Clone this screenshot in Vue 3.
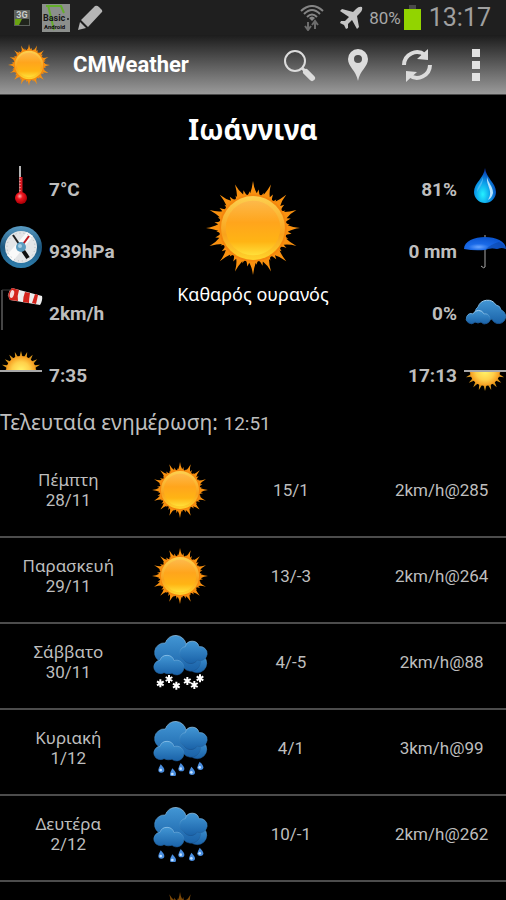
<template>
  <div class="screen">
    <!-- Shared gradients and weather symbols -->
    <svg class="defs" width="0" height="0" aria-hidden="true">
      <defs>
        <linearGradient id="sunDisc" x1="0" y1="0" x2="0" y2="1">
          <stop offset="0" stop-color="#fdb94a" />
          <stop offset="0.4" stop-color="#ffa51c" />
          <stop offset="0.75" stop-color="#ffb414" />
          <stop offset="1" stop-color="#ffe03a" />
        </linearGradient>
        <linearGradient id="sunRim" x1="0" y1="0" x2="0" y2="1">
          <stop offset="0" stop-color="#fdd050" />
          <stop offset="0.6" stop-color="#f9a21c" />
          <stop offset="1" stop-color="#ffd42c" />
        </linearGradient>
        <radialGradient id="sunHalf">
          <stop offset="0" stop-color="#fff46a" />
          <stop offset="0.6" stop-color="#ffd04a" />
          <stop offset="1" stop-color="#f59a1e" />
        </radialGradient>
        <linearGradient id="cloudFill" x1="0" y1="0" x2="0" y2="1">
          <stop offset="0" stop-color="#4296d4" />
          <stop offset="1" stop-color="#1a62a8" />
        </linearGradient>
        <linearGradient id="cloudEdge" x1="0" y1="0" x2="0" y2="1">
          <stop offset="0" stop-color="#a5d2f2" />
          <stop offset="0.5" stop-color="#3a86c4" />
          <stop offset="1" stop-color="#174f8a" />
        </linearGradient>
        <radialGradient id="dropFill" cx="0.4" cy="0.75" r="0.7">
          <stop offset="0" stop-color="#25f0ff" />
          <stop offset="0.5" stop-color="#0a9be8" />
          <stop offset="1" stop-color="#0a35b0" />
        </radialGradient>
        <radialGradient id="umbrellaFill" cx="0.35" cy="0.75" r="0.7">
          <stop offset="0" stop-color="#6aa6ff" />
          <stop offset="0.35" stop-color="#1a6ae8" />
          <stop offset="1" stop-color="#0c56d0" />
        </radialGradient>
        <radialGradient id="bulbFill" cx="0.4" cy="0.35" r="0.6">
          <stop offset="0" stop-color="#ffb0b0" />
          <stop offset="0.4" stop-color="#f01820" />
          <stop offset="1" stop-color="#b00008" />
        </radialGradient>
        <linearGradient id="gaugeRing" x1="0" y1="0" x2="0" y2="1">
          <stop offset="0" stop-color="#5a9cc4" />
          <stop offset="0.5" stop-color="#1c567e" />
          <stop offset="1" stop-color="#2f7fae" />
        </linearGradient>
      </defs>

      <symbol id="sun" viewBox="0 0 100 100">
        <path v-for="n in 16" :key="n" :d="rayPath" :transform="rotation(n, 16)" fill="#f8900f" />
        <circle cx="50" cy="50" r="36" fill="#f4860c" />
        <circle cx="50" cy="50" r="34" fill="url(#sunRim)" />
        <circle cx="50" cy="50" r="29" fill="url(#sunDisc)" />
      </symbol>

      <symbol id="halfSun" viewBox="0 0 42 22">
        <path
          v-for="n in 20"
          :key="n"
          d="M19 9 L21 1 L23 9 Z"
          :transform="`rotate(${n * 18} 21 21)`"
          fill="#d8941c"
        />
        <circle cx="21" cy="21" r="15" fill="url(#sunHalf)" />
        <path d="M0 21 H42" stroke="#a8a8a8" stroke-width="2" />
      </symbol>

      <symbol id="clouds" viewBox="0 0 168 168">
        <g fill="url(#cloudFill)" stroke="url(#cloudEdge)" stroke-width="2">
          <circle cx="136" cy="88" r="28" />
          <path
            d="M30 84 A29 29 0 0 1 40 27 A32 32 0 0 1 102 30 A27 27 0 0 1 140 66 A28 28 0 0 1 94 100 Q60 112 30 84 Z"
          />
          <path
            d="M95 76 A20 20 0 0 1 100 38 A21 21 0 0 1 141 38 A21 21 0 1 1 136 78 A24 24 0 0 1 95 76 Z"
          />
          <path
            d="M36 116 A20 20 0 1 1 24 79 A22 22 0 0 1 66 80 A22 22 0 1 1 60 118 Q48 122 36 116 Z"
          />
        </g>
      </symbol>
    </svg>

    <header class="status-bar">
      <div class="status-group">
        <svg class="icon-3g" viewBox="0 0 18 18">
          <rect x="1" y="1" width="16" height="16" fill="#5c605c" />
          <rect x="2" y="10" width="14" height="6" fill="#20241c" />
          <path d="M2 16 V10 H9 L6 16 Z" fill="#6aa312" />
          <text x="9" y="9" text-anchor="middle" font-size="9" font-weight="700" fill="#c9ccc9">3G</text>
        </svg>
        <svg class="icon-basic" viewBox="0 0 30 30">
          <rect x="1" y="1" width="28" height="28" fill="#8c8f8c" />
          <path d="M7 2 L13 27 M5 3 H20 L23 10" fill="none" stroke="#64ad2c" stroke-width="2" />
          <text x="2" y="18" font-size="9" font-weight="700" fill="#181818">Basic</text>
          <circle cx="27" cy="16" r="1" fill="#181818" />
          <text x="3" y="26" font-size="6" font-weight="700" fill="#0c0c0c">Android</text>
        </svg>
        <svg class="icon-pen" viewBox="0 0 26 26" fill="#b5b5b5">
          <path d="M4 15 L18 1 Q20 0 22 2 L25 5 Q26 7 24 8 L11 22 Z" />
          <path d="M3 17 L9 23 L1 25 Z" />
        </svg>
      </div>
      <div class="status-group">
        <svg class="icon-wifi" viewBox="0 0 24 26">
          <g fill="none" stroke="#858585" stroke-width="2">
            <path d="M1 6 Q12 -4 23 6" />
            <path d="M4 9 Q12 1 20 9" />
            <path d="M7 12 Q12 7 17 12" />
          </g>
          <path d="M9 13 Q12 10 15 13 L12 16 Z" fill="#858585" />
          <path
            d="M8 17 V24 M5 21 L8 25 L11 21 M15 24 V17 M12 20 L15 16 L18 20"
            fill="none"
            stroke="#6c6c6c"
            stroke-width="2"
          />
        </svg>
        <svg class="icon-plane" viewBox="0 0 24 24" fill="#c4c4c4">
          <path
            d="M23 1 Q20 0 17 3 L14 6 L3 3 L1 5 L10 11 L6 15 L2 15 L1 17 L5 19 L7 23 L9 22 L9 18 L13 14 L18 23 L20 21 L18 10 L21 7 Q24 4 23 1 Z"
          />
        </svg>
        <span class="battery-text">80%</span>
        <span class="battery"></span>
        <time class="clock">13:17</time>
      </div>
    </header>

    <nav class="app-bar">
      <svg class="app-logo"><use href="#sun" /></svg>
      <h1 class="app-title">CMWeather</h1>
      <div class="actions">
        <button type="button" class="action" aria-label="Search">
          <svg viewBox="0 0 32 32">
            <circle cx="12" cy="12" r="10" fill="none" stroke="#dcdcdc" stroke-width="2" />
            <path d="M19 19 L23 23" stroke="#dcdcdc" stroke-width="3" />
            <path d="M23 23 L29 29" stroke="#dcdcdc" stroke-width="6" stroke-linecap="round" />
          </svg>
        </button>
        <button type="button" class="action" aria-label="Location">
          <svg viewBox="0 0 32 32">
            <path
              d="M16 0 A10 10 0 0 0 6 10 C6 18 14 21 16 32 C18 21 26 18 26 10 A10 10 0 0 0 16 0 Z M16 6 A4 4 0 1 1 16 14 A4 4 0 1 1 16 6 Z"
              fill="#dcdcdc"
              fill-rule="evenodd"
            />
          </svg>
        </button>
        <button type="button" class="action" aria-label="Refresh">
          <svg viewBox="0 0 32 32">
            <g fill="none" stroke="#dcdcdc" stroke-width="4">
              <path d="M3 16 A13 13 0 0 1 24 6" />
              <path d="M29 16 A13 13 0 0 1 8 26" />
            </g>
            <path d="M27 0 V11 L16 10 Z M5 33 V22 L16 23 Z" fill="#dcdcdc" />
          </svg>
        </button>
        <button type="button" class="action" aria-label="Menu">
          <svg viewBox="0 0 32 32" fill="#e2e2e2">
            <rect x="12" y="0" width="8" height="8" />
            <rect x="12" y="12" width="8" height="8" />
            <rect x="12" y="24" width="8" height="8" />
          </svg>
        </button>
      </div>
    </nav>

    <main>
      <h2 class="city">Ιωάννινα</h2>

      <section class="current">
        <ul class="stats">
          <li class="stat">
            <svg class="stat-icon" viewBox="0 0 42 42">
              <path d="M20 2 V30" stroke="#909090" stroke-width="2" />
              <path d="M20 2 V13" stroke="#d8d8d8" stroke-width="1" />
              <path d="M21 13 V32" stroke="#d81820" stroke-width="3" />
              <path d="M20 14 V28" stroke="#ffc0c0" stroke-width="1" stroke-dasharray="1 2" />
              <circle cx="21" cy="34" r="6" fill="url(#bulbFill)" />
            </svg>
            <span>7°C</span>
          </li>
          <li class="stat">
            <svg class="stat-icon" viewBox="0 0 42 42">
              <circle cx="21" cy="21" r="21" fill="url(#gaugeRing)" />
              <circle cx="21" cy="21" r="16" fill="#e4e6e8" />
              <path d="M7 29 L27 6 L33 10 L13 35 Z" fill="#fafafa" />
              <circle cx="21" cy="21" r="14" fill="none" stroke="#b4babe" stroke-dasharray="1 3" />
              <path d="M13 9 L21 21" stroke="#202020" stroke-width="2" />
              <path d="M21 21 L29 10" stroke="#c01820" stroke-width="2" />
              <path d="M22 23 L28 32" stroke="#101010" stroke-width="4" />
              <circle cx="21" cy="21" r="5" fill="#5c9cc0" />
              <circle cx="20" cy="20" r="2" fill="#a8cee2" />
            </svg>
            <span>939hPa</span>
          </li>
          <li class="stat">
            <svg class="stat-icon" viewBox="0 0 42 42">
              <path d="M2 2 V42" stroke="#8a8a8a" stroke-width="1" />
              <path d="M2 2 L10 2 L8 8" fill="none" stroke="#3c3c3c" />
              <path d="M12 0 L42 8 Q43 12 40 17 L10 12 Q6 6 12 0 Z" fill="#ececec" />
              <path d="M12 0 L19 2 Q17 8 18 13 L10 12 Q6 6 12 0 Z" fill="#d4241c" />
              <path d="M25 4 L30 5 Q29 11 29 15 L23 14 Q23 9 25 4 Z M35 6 L38 7 Q37 12 36 16 L32 15 Z" fill="#d4241c" />
              <ellipse cx="12" cy="6" rx="2" ry="4" fill="#f4dada" transform="rotate(15 12 6)" />
            </svg>
            <span>2km/h</span>
          </li>
          <li class="stat">
            <svg class="stat-icon" viewBox="0 0 42 42">
              <use href="#halfSun" width="42" height="22" />
            </svg>
            <span>7:35</span>
          </li>
        </ul>

        <div class="now">
          <svg class="now-icon"><use href="#sun" /></svg>
          <p class="now-text">Καθαρός ουρανός</p>
        </div>

        <ul class="stats stats-right">
          <li class="stat">
            <svg class="stat-icon" viewBox="0 0 42 42">
              <path d="M21 4 C22 14 32 19 32 28 A11 11 0 0 1 10 28 C10 19 20 14 21 4 Z" fill="url(#dropFill)" />
              <path d="M23 13 C24 19 29 22 29 29 C28 33 26 35 24 36 C30 27 22 22 23 13 Z" fill="#b8e4ff" />
              <path d="M19 13 C18 19 13 22 13 28 C16 23 19 20 19 13 Z" fill="#4cb8f4" />
            </svg>
            <span>81%</span>
          </li>
          <li class="stat">
            <svg class="stat-icon" viewBox="0 0 42 42">
              <path d="M21 9 V41 Q20 43 17 40" fill="none" stroke="#a8a8a8" stroke-width="1" />
              <path d="M0 23 C0 7 42 7 42 23 Q38 21 33 23 Q27 21 21 24 Q10 25 0 23 Z" fill="url(#umbrellaFill)" />
              <path d="M21 24 Q27 21 33 23 Q38 21 42 23 Q40 18 35 16 Q27 18 21 24 Z" fill="#0a3f9c" opacity="0.5" />
            </svg>
            <span>0 mm</span>
          </li>
          <li class="stat">
            <svg class="stat-icon" viewBox="0 0 42 42">
              <g fill="url(#cloudFill)" stroke="url(#cloudEdge)" transform="translate(2 1)">
                <path d="M12 28 A6 6 0 0 1 12 18 A10 10 0 0 1 30 16 A6 6 0 0 1 35 21 A7 7 0 1 1 26 30 Q18 34 12 28 Z" />
                <path d="M9 33 A5 5 0 1 1 7 25 A6 6 0 0 1 18 25 A5 5 0 1 1 15 33 Q12 35 9 33 Z" />
              </g>
            </svg>
            <span>0%</span>
          </li>
          <li class="stat">
            <svg class="stat-icon" viewBox="0 0 42 42">
              <use href="#halfSun" width="42" height="22" transform="translate(0 42) scale(1 -1)" />
            </svg>
            <span>17:13</span>
          </li>
        </ul>
      </section>

      <p class="updated">Τελευταία ενημέρωση: <time>12:51</time></p>

      <table class="forecast">
        <tbody>
          <tr v-for="(day, i) in forecast" :key="i">
            <td class="col-date">
              <div class="day-name">{{ day.name }}</div>
              <div>{{ day.date }}</div>
            </td>
            <td class="col-icon">
              <svg v-if="day.icon === 'sun'" class="day-icon"><use href="#sun" /></svg>
              <svg v-else class="day-icon" viewBox="0 0 168 168">
                <use href="#clouds" width="168" height="168" />
                <g v-if="day.icon === 'snow'" stroke="#fff" stroke-width="6">
                  <path
                    v-for="([x, y], n) in flakes"
                    :key="n"
                    d="M0 -12 V12 M-10 -6 L10 6 M-10 6 L10 -6"
                    :transform="`translate(${x} ${y})`"
                  />
                </g>
                <g v-else>
                  <g v-for="([x, y], n) in drops" :key="n" :transform="`translate(${x} ${y})`">
                    <path d="M-2 -13 Q9 -2 9 4 A9 8 0 0 1 -9 4 Q-8 -2 -2 -13 Z" fill="#4a8ee0" />
                    <circle cx="-2" cy="4" r="4" fill="#c4e2ff" />
                  </g>
                </g>
              </svg>
            </td>
            <td class="col-temp">{{ day.temp }}</td>
            <td class="col-wind"><span>{{ day.wind }}</span></td>
          </tr>
        </tbody>
      </table>
    </main>
  </div>
</template>

<script setup>
// One flame of the sun, pointing up from the centre of a 100x100 box
const rayPath =
  'M41 18 Q46 15 46 11 L47 13 Q49 8 50 0 Q51 8 54 13 L56 9 Q56 14 59 18 L50 30 Z'

const rotation = (n, total) => `rotate(${(n * 360) / total} 50 50)`

const flakes = [
  [25, 148],
  [51, 135],
  [73, 155],
  [106, 141],
  [127, 153],
  [144, 133],
]

const drops = [
  [28, 146],
  [63, 158],
  [88, 142],
  [120, 153],
  [145, 138],
]

const forecast = [
  { name: 'Πέμπτη', date: '28/11', icon: 'sun', temp: '15/1', wind: '2km/h@285' },
  { name: 'Παρασκευή', date: '29/11', icon: 'sun', temp: '13/-3', wind: '2km/h@264' },
  { name: 'Σάββατο', date: '30/11', icon: 'snow', temp: '4/-5', wind: '2km/h@88' },
  { name: 'Κυριακή', date: '1/12', icon: 'rain', temp: '4/1', wind: '3km/h@99' },
  { name: 'Δευτέρα', date: '2/12', icon: 'rain', temp: '10/-1', wind: '2km/h@262' },
  { name: '', date: '', icon: 'sun', temp: '', wind: '' },
]
</script>

<style>
body {
  margin: 0;
  background: #000;
}
</style>

<style scoped>
.screen {
  position: relative;
  height: 100vh;
  overflow: hidden;
  background: #000;
  color: #bebebe;
  font-family: Roboto, 'Noto Sans', sans-serif;
}

/* The list fades out at the lower edge */
.screen::after {
  content: '';
  position: absolute;
  left: 0;
  right: 0;
  bottom: 0;
  height: 16px;
  background: rgba(0, 0, 0, 0.5);
}

.defs {
  position: absolute;
}

/* Status bar */
.status-bar {
  display: flex;
  justify-content: space-between;
  align-items: center;
  height: 35px;
  padding: 0 15px 0 13px;
  background: #1f1f1f;
}

.status-group {
  display: flex;
  align-items: center;
}

.icon-3g {
  width: 18px;
  height: 18px;
  margin-right: 10px;
}

.icon-basic {
  width: 30px;
  height: 30px;
  margin-right: 6px;
}

.icon-pen {
  width: 26px;
  height: 26px;
}

.icon-wifi {
  width: 24px;
  height: 26px;
  margin-right: 15px;
}

.icon-plane {
  width: 24px;
  height: 24px;
  margin-right: 6px;
}

.battery-text {
  margin-right: 3px;
  font-size: 17px;
  color: #a8a8a8;
}

.battery {
  position: relative;
  width: 17px;
  height: 21px;
  margin: 4px 8px 0 0;
  background: #92d400;
}

.battery::before {
  content: '';
  position: absolute;
  top: -4px;
  left: 5px;
  width: 7px;
  height: 4px;
  background: #4a4a4a;
}

.clock {
  font-size: 25px;
  color: #a0a0a0;
}

/* Title bar */
.app-bar {
  display: flex;
  align-items: center;
  height: 60px;
  box-sizing: border-box;
  padding: 0 14px 0 8px;
  border-bottom: 1px solid #4a4a4a;
  background: linear-gradient(#1c1c1c, #9a9a9a);
}

.app-logo {
  width: 42px;
  height: 42px;
  margin-right: 23px;
}

.app-title {
  flex: 1;
  margin: 0;
  font-size: 22px;
  font-weight: 700;
  color: #fff;
}

.actions {
  display: flex;
  gap: 27px;
}

.action {
  padding: 0;
  border: 0;
  background: none;
}

.action svg {
  display: block;
  width: 32px;
  height: 32px;
  overflow: visible;
}

/* Current conditions */
.city {
  margin: 0;
  padding: 14px 0 15px;
  font-family: 'Noto Sans', sans-serif;
  font-size: 28px;
  line-height: 40px;
  font-weight: 700;
  text-align: center;
  color: #fff;
}

.current {
  display: flex;
  justify-content: space-between;
}

.stats {
  display: flex;
  flex: 1;
  flex-direction: column;
  gap: 20px;
  margin: 0;
  padding: 0;
  list-style: none;
}

.stat {
  display: flex;
  align-items: center;
  gap: 7px;
  height: 42px;
  font-size: 19px;
  font-weight: 700;
}

.stat span {
  padding-top: 8px;
}

.stats-right .stat {
  flex-direction: row-reverse;
}

.stat-icon {
  width: 42px;
  height: 42px;
  overflow: visible;
}

.now {
  display: flex;
  flex-direction: column;
  align-items: center;
  padding-top: 17px;
}

.now-icon {
  width: 94px;
  height: 94px;
}

.now-text {
  margin: 5px 0 0;
  font-family: 'Noto Sans', sans-serif;
  font-size: 18px;
  line-height: 28px;
  color: #fff;
}

.updated {
  margin: 14px 0 12px;
  font-family: 'Noto Sans', sans-serif;
  font-size: 21px;
  line-height: 32px;
}

.updated time {
  font-family: Roboto, sans-serif;
  font-size: 19px;
}

/* Forecast */
.forecast {
  width: 100%;
  table-layout: fixed;
  border-collapse: collapse;
  font-size: 17px;
  line-height: 20px;
  text-align: center;
}

.forecast td {
  height: 76px;
  padding: 0 0 8px;
  border-bottom: 2px solid #4c4c4c;
}

.col-date {
  width: 27%;
}

.day-name {
  font-family: 'Noto Sans', sans-serif;
}

.col-icon {
  width: 17%;
}

.col-temp {
  width: 27%;
}

.col-wind {
  width: 29%;
}

.col-wind span {
  margin-left: 18px;
}

.day-icon {
  display: block;
  width: 56px;
  height: 56px;
  margin: 0 auto;
}
</style>
